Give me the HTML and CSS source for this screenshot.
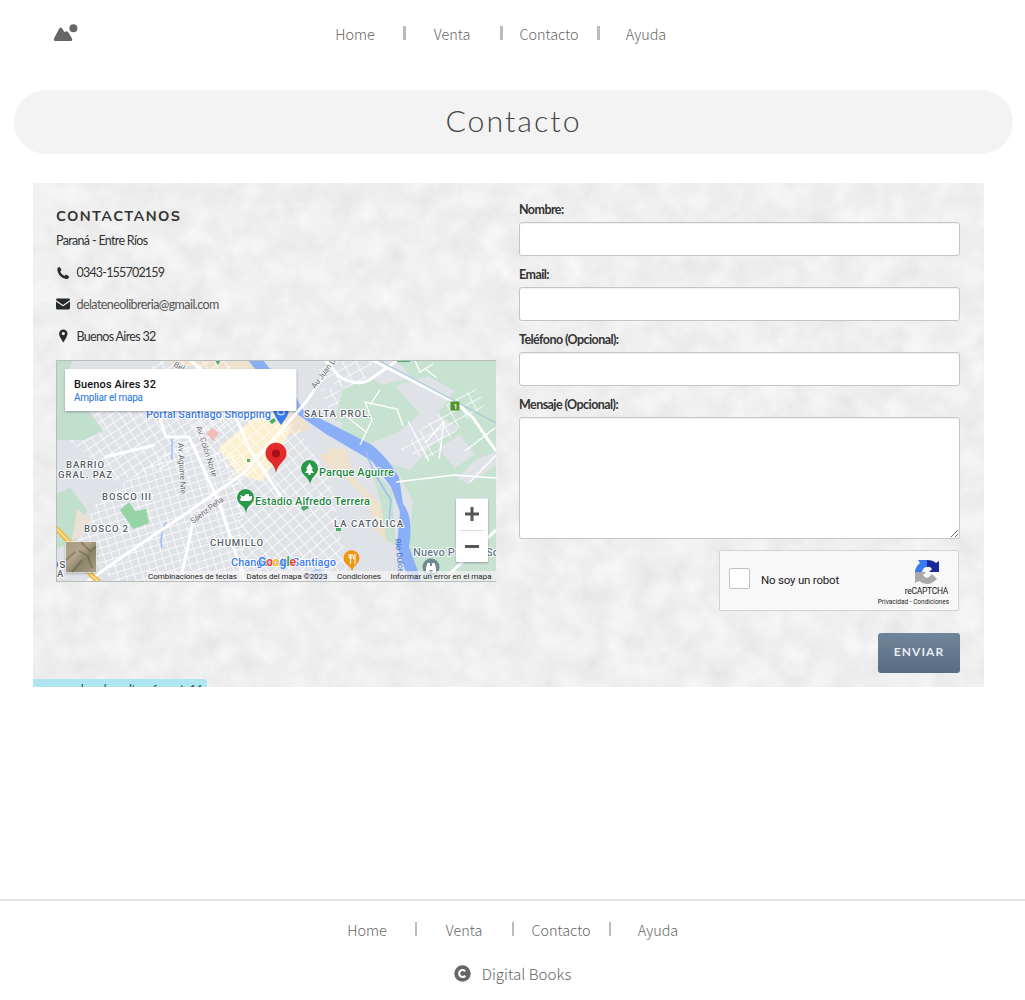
FILE: index.html
```html
<!DOCTYPE html>
<html lang="es">
<head>
<meta charset="utf-8">
<title>Contacto - Digital Books</title>
<link rel="stylesheet" href="styles.css">
</head>
<body>
<header class="header">
  <svg class="logo" width="26" height="18" viewBox="53 24 26 18"><path d="M54 38.500L58.800 29.200Q60.700 26 62.700 29.200L64.500 32.200Q66.800 30.200 68.500 32.600L72 38.600Q72.900 40.900 70.800 40.900H55.300Q53.200 40.800 54 38.500Z"/><circle cx="73.400" cy="28.200" r="4"/></svg>
  <nav class="nav"><a>Home</a><a>Venta</a><a>Contacto</a><a>Ayuda</a></nav>
</header>
<h1 class="title">Contacto</h1>
<main class="panel">
  <svg class="texture" width="951" height="504">
    <filter id="stone" x="0" y="0" width="100%" height="100%" color-interpolation-filters="sRGB">
      <feTurbulence type="fractalNoise" baseFrequency="0.04" numOctaves="6" seed="8"/>
      <feColorMatrix values="0.07 0.05 0 0 0.878  0.07 0.05 0 0 0.878  0.07 0.05 0 0 0.878  0 0 0 0 1"/>
    </filter>
    <rect width="951" height="504" filter="url(#stone)"/>
  </svg>
  <section class="info">
    <h2 class="info-title">CONTACTANOS</h2>
    <p class="line place"><span>Paraná - Entre Ríos</span></p>
    <p class="line phone"><svg width="14" height="14" viewBox="0 0 14 14"><path d="M3.800 1L5.500 4.200L4.200 5.700Q5.600 8.700 8.400 9.900L9.900 8.500L13 10.200Q13 13 10.300 13Q6.500 12.800 3.700 9.600Q1.200 6.500 1.300 3.300Q1.500 1 3.800 1Z"/></svg><span>0343-155702159</span></p>
    <p class="line mail"><svg width="14" height="14" viewBox="0 0 14 14"><path d="M0 3Q0 1.600 1.300 1.600H12.700Q14 1.600 14 3L7.700 7.500Q7 8 6.300 7.500ZM0 4.600L6 8.800Q7 9.500 8 8.800L14 4.600V11Q14 12.400 12.700 12.400H1.300Q0 12.400 0 11Z"/></svg><span>delateneolibreria@gmail.com</span></p>
    <p class="line address"><svg width="14" height="14" viewBox="0 0 14 14"><path fill-rule="evenodd" d="M7.300.5A4.200 4.200 0 0 1 11.500 4.700C11.500 7 9 10.500 7.300 13.500C5.600 10.500 3.100 7 3.100 4.700A4.200 4.200 0 0 1 7.300.5ZM7.300 2.900A1.700 1.700 0 1 0 7.300 6.300A1.700 1.700 0 1 0 7.300 2.900Z"/></svg><span>Buenos Aires 32</span></p>
    <svg class="map" width="440" height="222" viewBox="56 360 440 222">
      <defs>
        <pattern id="west" width="9" height="8" patternUnits="userSpaceOnUse" patternTransform="rotate(-33)"><path d="M0 0H9M0 0V8" stroke="#fff" stroke-width="1.500" fill="none"/></pattern>
        <pattern id="south" width="8" height="7" patternUnits="userSpaceOnUse" patternTransform="rotate(-17)"><path d="M0 0H8M0 0V7" stroke="#fff" stroke-width="1.400" fill="none"/></pattern>
        <pattern id="center" width="9" height="9" patternUnits="userSpaceOnUse" patternTransform="rotate(-40)"><path d="M0 0H9M0 0V9" stroke="#fff" stroke-width="1.500" fill="none"/></pattern>
        <pattern id="north" width="12" height="9" patternUnits="userSpaceOnUse" patternTransform="rotate(-28)"><path d="M0 0H12M0 0V9" stroke="#fff" stroke-width="1.500" fill="none"/></pattern>
        <linearGradient id="ground" x2="1" y2="1"><stop stop-color="#a7a080"/><stop offset=".4" stop-color="#b2a18a"/><stop offset=".6" stop-color="#8a8468"/><stop offset="1" stop-color="#aaa08a"/></linearGradient>
      </defs>
      <rect x="56" y="360" width="440" height="222" fill="#dfe2e7"/>
      <path d="M160 360H250L300 412L310 430L285 436L262 402L222 372ZM326 446L345 452L352 475L380 505L390 545L376 530L366 498L345 478ZM318 455L345 448L352 470L335 476Z" fill="#eee2cd"/>
      <path d="M218 448L272 403L290 432L262 482L238 474Z" fill="#fbf0cf"/>
      <path d="M70 440L120 390L160 360H230L240 420L160 470L115 482Z" fill="url(#west)"/>
      <path d="M95 505L180 440L240 455L245 582H115L75 545Z" fill="url(#south)"/>
      <path d="M190 425L250 390L300 430L330 480L350 582H243L235 490Z" fill="url(#center)"/>
      <path d="M324 360H373L366 378L345 388L318 377ZM320 388L345 392L366 425L334 422Z" fill="url(#north)"/>
      <path d="M56 360H73L66 375L76 388L90 413L103 431L84 440H56ZM56 494L70 488L87 510L77 540L56 549Z" fill="#c1dfcd"/>
      <path d="M390 360H496V582H415L409 540L413 502L397 470L373 447L340 430L350 408L368 388L412 378L402 366ZM343 390L370 378L384 385L367 401L352 426L334 420Z" fill="#c8e2d2"/>
      <path d="M372 470L392 490L396 545L386 540L381 505Z" fill="#c8e2d2"/>
      <path d="M395 386L428 376L455 391L438 414L459 428L431 446L410 470L382 461L369 444L398 432L420 414ZM438 448L460 435L475 454L455 468ZM458 478L475 460L496 452V465L468 484Z" fill="#dfe2e7"/>
      <path d="M400 450L450 402L475 388L486 404L462 425L430 460Z" fill="url(#north)"/>
      <path d="M120 510L129 502L135 511L146 509L149 523L133 529Z" fill="#96d4a5"/>
      <path d="M77 509L90 519L85 533L72 541Z" fill="#ebdfd6"/>
      <path d="M248 360H263Q274 375 292 390L303 410L331 424L372 445Q388 458 399 477L403 504Q414 517 409 547L422 582H409L397 546L400 512L391 487L372 461L326 434L297 414L265 382Z" fill="#8aaff7"/>
      <path d="M366 451Q370 468 391 500L389 521M166 522Q159 538 162 548M172 438V460" fill="none" stroke="#9dbdf8" stroke-width="1.500"/>
      <g fill="none" stroke="#fff" stroke-width="3"><path d="M87 582Q128 552 181 517L244 473L306 402L335 360M159 415L166 437H189L218 500L245 582M190 360L223 388L250 450L285 503M325 360L340 377Q360 388 372 378L398 360M372 360L458 404L473 418L496 451M441 582L496 530M105 457L155 445M194 516L188 546L180 582"/></g>
      <g fill="none" stroke="#fff" stroke-width="1.300"><path d="M360 445L372 420L365 402L397 409L403 426M425 443L444 422L439 459M380 390L370 405M408 421L429 461M345 415L367 433M433 364L420 372L415 361M437 378L424 368M465 451L495 428M470 482L496 455M396 482L454 475L496 478"/></g>
      <path d="M378 360L496 423" fill="none" stroke="#a7c8dc" stroke-width="1.200"/>
      <path d="M56 528L75 548L91 575L99 582" fill="none" stroke="#efb949" stroke-width="5"/><path d="M56 528L75 548L91 575L99 582" fill="none" stroke="#ffe69c" stroke-width="1.500"/>
      <path d="M206 433L213 428L219 433L213 441Z" fill="#f2bbb5"/>
      <path d="M397 360h13v2h-13zM215 360h6l-3 5ZM269 421l5-3 2 3-4 3ZM301 507l6-3 2 4-6 3ZM336 526h5v5h-5zM247 459h3v3h-3z" fill="#4aac67"/>
      <rect x="450.500" y="401.500" width="9" height="9" fill="#55942d"/><text class="poi shield" x="453.400" y="409">1</text>
      <path d="M273 410H289Q289 415 281 425Q274 416 273 410Z" fill="#397aed"/><path d="M278 411v3q3 2 6 0v-3" stroke="#fff" fill="none"/>
      <g class="area">
        <text x="304" y="417" textLength="68">SALTA PROL.</text><text x="66" y="468" textLength="39">BARRIO</text><text x="58" y="477.500" textLength="55">GRAL. PAZ</text>
        <text x="102" y="500" textLength="50">BOSCO III</text><text x="84" y="532" textLength="45">BOSCO 2</text><text x="210" y="546" textLength="54">CHUMILLO</text><text x="334" y="527" textLength="70">LA CATÓLICA</text>
        <text x="52" y="568">OS</text><text x="57" y="577">A</text>
      </g>
      <g class="street">
        <text transform="translate(196 427) rotate(72)" textLength="53">Av. Colón Norte</text><text transform="translate(178 443) rotate(87)" textLength="53">Av. Aguirre Nte.</text>
        <text transform="translate(193 524) rotate(-37)" textLength="39">Sáenz Peña</text><text transform="translate(315 389) rotate(-53)" textLength="35">Au Juan D</text><text transform="translate(173 366) rotate(30)">Belg</text>
        <text class="river" transform="translate(395 539) rotate(84)" textLength="34">Río Dulce</text>
      </g>
      <text class="poi blue" x="146" y="418" textLength="125">Portal Santiago Shopping</text>
      <g class="poi green"><text x="319" y="476" textLength="75">Parque Aguirre</text><text x="255" y="505" textLength="115">Estadio Alfredo Terrera</text></g>
      <text class="poi blue" x="231" y="566" textLength="105">Changomás Santiago</text>
      <text class="poi slate" x="413" y="556" textLength="86">Nuevo Puente So</text>
      <path d="M276 473Q275 466 269 461A10.500 10.500 0 1 1 283 461Q277 467 276 473Z" fill="#e42b2b"/><circle cx="276" cy="453.500" r="4" fill="#a50f18"/>
      <g fill="#279847"><path d="M310 484Q309 479 304 475A8.500 8.500 0 1 1 315 475Q311 479 310 484ZM246 513Q245 507 240 504A8.500 8.500 0 1 1 251 504Q247 507 246 513Z"/></g>
      <path d="M309.500 463L313 469H311.500L314 473H310.500V475H308.500V473H305L307.500 469H306ZM240 495l4 1.500 2-2.500h3v2.500l3-.5v3l-2 2h-9l-1.500-2 2-1Z" fill="#fff"/>
      <path d="M352 571Q351 567 346 564A8 8 0 1 1 357 564Q353 567 352 571Z" fill="#f29510"/><path d="M349 554v3q0 1.500 1.500 1.500T352 557v-3M350.500 554v10M355 564v-10q-2 2-1.500 5H355" stroke="#fff" fill="none"/>
      <circle cx="431" cy="567" r="8.500" fill="#708893"/><path d="M426 573V568l1.500-5h2.500v3h2v-3h2.500l1.500 5v5h-3.500v-3h-3v3Z" fill="#fff"/>
      <circle cx="317" cy="576" r="7" fill="#a7c5fb"/>
      <text class="google" x="258" y="566" textLength="38"><tspan fill="#4285f4">G</tspan><tspan fill="#ea4335">o</tspan><tspan fill="#fbbc05">o</tspan><tspan fill="#4285f4">g</tspan><tspan fill="#34a853">l</tspan><tspan fill="#ea4335">e</tspan></text>
      <rect class="lifted" x="65" y="369" width="231.500" height="42" fill="#fff"/>
      <text class="place-name" x="74" y="387.500" textLength="82">Buenos Aires 32</text><text class="enlarge" x="74" y="400.500" textLength="69">Ampliar el mapa</text>
      <rect class="lifted" x="65.500" y="541.500" width="31" height="31" fill="#fff"/><rect x="66" y="542" width="30" height="30" fill="url(#ground)"/><path d="M81 542L90 551L96 547M79 551L88 556L92 568M66 560L75 552M72 572L82 560" stroke="#52543e" stroke-width="2" opacity=".4" fill="none"/>
      <rect class="lifted" x="456" y="498.500" width="32" height="63.500" rx="1" fill="#fff"/><path d="M460 530.500H484" stroke="#ddd"/><path d="M465 514H479M472 507V521M465 546.500H479" stroke="#555" stroke-width="3"/>
      <path d="M147 571H496V581H147Z" fill="#f5f5f5" opacity=".7"/>
      <g class="legal"><text x="148" y="578.500" textLength="89">Combinaciones de teclas</text><text x="246.500" y="578.500" textLength="81">Datos del mapa ©2023</text><text x="337" y="578.500" textLength="44">Condiciones</text><text x="390.500" y="578.500" textLength="101">Informar un error en el mapa</text></g>
      <path d="M56.500 582V360.500H496M56 581.500H496" fill="none" stroke="#b8bcbc"/>
    </svg>
  </section>
  <form class="form">
    <label>Nombre:</label><input type="text">
    <label>Email:</label><input type="text">
    <label>Teléfono (Opcional):</label><input type="text">
    <label>Mensaje (Opcional):</label><textarea></textarea>
    <div class="captcha">
      <span class="check"></span><span class="robot">No soy un robot</span>
      <div class="brand">
        <svg width="26" height="26" viewBox="0 0 26 26"><path d="M4 1H13V8Q9 8 8 13H1Q1 8 6 4Z" fill="#397af0"/><path d="M13 1Q19 1 22 4L25 2V13H15L18 10Q16 7 13 8Z" fill="#17299c"/><path d="M1 13H12L9 16Q11 20 15 18L18 15L23 20Q14 29 5 22L1 24Z" fill="#a9a9a9"/></svg>
        <span class="recaptcha">reCAPTCHA</span><span class="terms">Privacidad - Condiciones</span>
      </div>
    </div>
    <button class="send" type="button">ENVIAR</button>
  </form>
  <div class="toast"><span>www.descubrecultura.formato14</span></div>
</main>
<footer class="footer">
  <nav class="nav"><a>Home</a><a>Venta</a><a>Contacto</a><a>Ayuda</a></nav>
  <div class="copyright"><svg width="17" height="17" viewBox="0 0 17 17"><circle cx="8.500" cy="8.500" r="8.200" fill="#666"/><path d="M11.300 6.200A3.500 3.500 0 1 0 11.300 10.800" fill="none" stroke="#fff" stroke-width="2.200"/></svg><span>Digital Books</span></div>
</footer>
</body>
</html>
```
FILE: styles.css
```css
* { box-sizing: border-box; }
body { margin: 0; width: 1025px; height: 1000px; overflow: hidden; display: flex; flex-direction: column; background: #fff; color: #666; font-family: "Noto Sans CJK JP", sans-serif; font-weight: 300; }
.header { height: 90px; display: flex; padding: 24px 0 0 53px; }
.logo { fill: #666; }
.nav { display: flex; font-size: 14.400px; line-height: 20px; }
.header .nav { margin-left: 227.500px; }
.nav a { width: 97px; height: 20px; display: flex; justify-content: center; position: relative; }
.nav a:not(:last-child)::after { content: ""; position: absolute; right: -2px; top: 2px; width: 2.500px; height: 14px; background: #bbb; }
.title { margin: 0 12px 0 14px; height: 64px; border-radius: 32px; background: #f3f3f3; color: #444; font: 300 30.300px/61px Lato, sans-serif; letter-spacing: 2px; text-align: center; }
.panel { margin: 29px 0 0 33px; width: 951px; height: 504px; position: relative; overflow: hidden; display: grid; grid-template-columns: 440px 441px; column-gap: 23px; padding: 0 24px 0 23px; font-family: Lato, sans-serif; font-weight: 400; color: #333; }
.texture { position: absolute; left: 0; top: 0; }
.info, .form { position: relative; display: flex; flex-direction: column; }
.info { padding-top: 24px; }
.info-title { margin: 0; font: 700 14.500px/18px Nunito, Lato, sans-serif; letter-spacing: 1.400px; color: #333; }
.line { margin: 0; height: 31.800px; display: flex; align-items: center; gap: 6.500px; font-size: 12.500px; letter-spacing: -.57px; }
.place { letter-spacing: -.67px; }
.phone { letter-spacing: -.8px; }
.address { letter-spacing: -.67px; }
.line svg { fill: #252a2e; }
.mail { color: #555; }
.map { margin-top: 7.800px; font-family: Roboto, sans-serif; }
.area { font-size: 9.500px; font-weight: 500; fill: #555d66; stroke: #fff; stroke-width: 2px; paint-order: stroke; letter-spacing: 1px; }
.street { font-size: 8px; fill: #666; stroke: #fff; stroke-width: 1px; paint-order: stroke; }
.river { fill: #3b70cb; stroke: none; }
.poi { font-size: 11px; font-weight: 500; stroke: #fff; stroke-width: 2px; paint-order: stroke; }
.blue { fill: #397aed; }
.green { fill: #218640; }
.slate { fill: #637d8b; }
.shield { fill: #fff; stroke: none; font-size: 7px; }
.google { font-size: 12px; font-weight: 700; stroke: #fff; stroke-width: 1px; paint-order: stroke; }
.place-name { font-size: 11px; font-weight: 500; fill: #111; }
.enlarge { font-size: 10px; fill: #1a73e8; }
.legal { font-size: 8px; fill: #222; }
.lifted { filter: drop-shadow(0 1px 1px rgba(0, 0, 0, .3)); }
.form { padding-top: 18px; }
.form label { height: 16px; line-height: 17px; font-size: 12.500px; font-weight: 700; letter-spacing: -.57px; margin-bottom: 4.500px; }
.form input, .form textarea { display: block; width: 441px; height: 34px; border: 1px solid #c5c5c5; border-radius: 3px; background: #fff; margin: 0 0 10.600px; padding: 0; box-shadow: inset 0 1px 1px rgba(0, 0, 0, .06); flex: none; }
.form textarea { height: 122px; margin: 0 0 11.500px; resize: both; }
.captcha { align-self: flex-end; margin-right: 1px; width: 240px; height: 61px; border: 1.500px solid #d3d3d3; border-radius: 2px; background: #f8f8f8; display: flex; flex: none; font-family: Roboto, sans-serif; color: #222; }
.check { width: 21px; height: 21px; margin: 17px 0 0 9px; border: 1.500px solid #c1c1c1; border-radius: 2px; background: #fff; }
.robot { margin: 22px 0 0 11px; font-size: 11.500px; line-height: 15px; letter-spacing: -.2px; }
.brand { margin: 8px 9px 0 auto; display: flex; flex-direction: column; align-items: flex-end; }
.brand svg { margin-right: 9px; }
.recaptcha { font-size: 8.500px; line-height: 13px; letter-spacing: -.3px; margin-right: 1px; }
.terms { font-size: 6.500px; line-height: 8px; }
.send { align-self: flex-end; margin: 22px 0 0; width: 82px; height: 40px; border: 0; border-radius: 3px; background: linear-gradient(#71859a, #576b84); color: #e8edf2; font: 700 12px/36px Lato, sans-serif; letter-spacing: 1.100px; padding: 0 0 2px; flex: none; }
.toast { position: absolute; left: 0; bottom: 0; width: 174px; height: 8px; overflow: hidden; border-radius: 0 4px 0 0; background: #afe5f0; font-size: 11px; line-height: 16px; font-style: italic; padding: 2px 5px 0 0; text-align: right; }
.footer { margin-top: auto; height: 101px; border-top: 2px solid #e4e4e4; display: flex; flex-direction: column; align-items: center; }
.footer .nav { margin-top: 19px; }
.footer .nav a::after { width: 2px; right: -1px; }
.copyright { margin-top: 22px; display: flex; align-items: center; gap: 11px; font-size: 15.200px; line-height: 22px; }
```
